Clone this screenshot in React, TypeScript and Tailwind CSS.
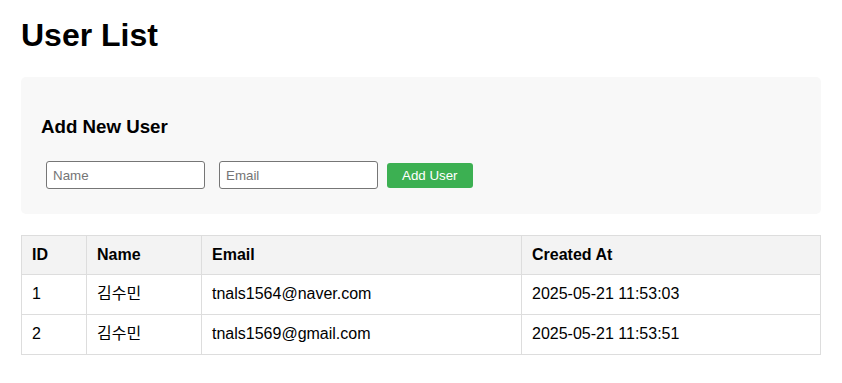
import React, { useState } from "react";

interface User {
  id: number;
  name: string;
  email: string;
  created_at: string;
}

const initialUsers: User[] = [
  { id: 1, name: "김수민", email: "tnals1564@naver.com", created_at: "2025-05-21 11:53:03" },
  { id: 2, name: "김수민", email: "tnals1569@gmail.com", created_at: "2025-05-21 11:53:51" },
];

export default function App() {
  const [users, setUsers] = useState<User[]>(initialUsers);
  const [name, setName] = useState("");
  const [email, setEmail] = useState("");

  const handleAdd = () => {
    if (!name || !email) return;
    setUsers((prev) => [
      ...prev,
      { id: prev.length + 1, name, email, created_at: "2025-05-21 11:54:00" },
    ]);
    setName("");
    setEmail("");
  };

  return (
    <div
      className="min-h-screen bg-white px-[21px] pt-[17px] pb-5 text-black"
      style={{ fontFamily: '"Liberation Sans", Arial, "Noto Sans CJK KR", sans-serif' }}
    >
      <h1 className="text-[32px] leading-[37px] font-bold mb-[23px]">User List</h1>

      {/* Add form */}
      <div className="bg-[#f8f8f8] rounded-[5px] p-5">
        <h3 className="text-[18.72px] leading-[21.5px] font-bold my-[18.7px]">
          Add New User
        </h3>
        <div className="flex items-center">
          <input
            type="text"
            placeholder="Name"
            value={name}
            onChange={(e) => setName(e.target.value)}
            className="m-[5px] w-[159px] h-[28px] px-[6px] pt-[1px] bg-white border border-[#767676] rounded-[3px] text-[13.33px] placeholder:text-[#757575] outline-none"
          />
          <input
            type="text"
            placeholder="Email"
            value={email}
            onChange={(e) => setEmail(e.target.value)}
            className="m-[5px] ml-[9px] w-[159px] h-[28px] px-[6px] pt-[1px] bg-white border border-[#767676] rounded-[3px] text-[13.33px] placeholder:text-[#757575] outline-none"
          />
          <button
            onClick={handleAdd}
            className="ml-[4px] mt-[1px] h-[25px] px-[15px] pt-[1px] bg-[#3cb052] text-white text-[13.33px] rounded-[3px]"
          >
            Add User
          </button>
        </div>
      </div>

      {/* Users table */}
      <table className="mt-[21px] w-[800px] table-fixed border-collapse text-[16px]">
        <thead>
          <tr className="bg-[#f3f3f3]">
            <th className="w-[65px] h-[39px] px-[10px] border border-[#dddddd] text-left font-bold">ID</th>
            <th className="w-[115px] px-[10px] border border-[#dddddd] text-left font-bold">Name</th>
            <th className="w-[320px] px-[10px] border border-[#dddddd] text-left font-bold">Email</th>
            <th className="px-[10px] border border-[#dddddd] text-left font-bold">Created At</th>
          </tr>
        </thead>
        <tbody>
          {users.map((user) => (
            <tr key={user.id}>
              <td className="h-[40px] px-[10px] border border-[#dddddd]">{user.id}</td>
              <td className="px-[10px] border border-[#dddddd]">{user.name}</td>
              <td className="px-[10px] border border-[#dddddd]">{user.email}</td>
              <td className="px-[10px] border border-[#dddddd]">{user.created_at}</td>
            </tr>
          ))}
        </tbody>
      </table>
    </div>
  );
}
